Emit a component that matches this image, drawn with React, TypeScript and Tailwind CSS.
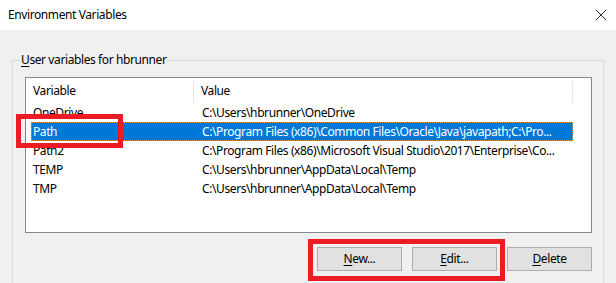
import { X } from "lucide-react";

const rows = [
  { name: "OneDrive", value: "C:\\Users\\hbrunner\\OneDrive" },
  { name: "Path", value: "C:\\Program Files (x86)\\Common Files\\Oracle\\Java\\javapath;C:\\Pro...", selected: true },
  { name: "Path2", value: "C:\\Program Files (x86)\\Microsoft Visual Studio\\2017\\Enterprise\\Co..." },
  { name: "TEMP", value: "C:\\Users\\hbrunner\\AppData\\Local\\Temp" },
  { name: "TMP", value: "C:\\Users\\hbrunner\\AppData\\Local\\Temp" },
];

function Button({ label, hot }: { label: string; hot: string }) {
  const rest = label.slice(1);
  return (
    <button className="flex h-[24px] w-[85px] items-center justify-center border border-[#adadad] bg-[#e1e1e1] text-[12px] text-black">
      <span className="underline underline-offset-2">{hot}</span>
      {rest}
    </button>
  );
}

export default function App() {
  return (
    <div className="relative h-[283px] w-[616px] overflow-hidden bg-[#f0f0f0] font-['Noto_Sans',sans-serif] text-[12px] tracking-[-0.4px] text-black">
      {/* title bar */}
      <div className="flex h-[30px] items-center justify-between bg-white pl-[8px] pr-[5px]">
        <span className="leading-none">Environment Variables</span>
        <X className="h-[20px] w-[20px]" strokeWidth={1} />
      </div>

      {/* group box */}
      <div className="ml-[12px] mt-[30px] h-[260px] w-[592px] border border-[#dcdcdc] pl-[12px] pt-[16px]">
        <div className="absolute left-[20px] top-[51px] bg-[#f0f0f0] px-[1px] leading-[18px]">
          <span className="underline underline-offset-2">U</span>ser variables for hbrunner
        </div>

        {/* list view */}
        <div className="h-[156px] w-[567px] border border-[#828790] bg-white">
          <div className="flex h-[25px] items-center">
            <div className="relative flex h-full w-[168px] items-center pl-[7px]">
              Variable
              <span className="absolute right-0 top-[3px] h-[22px] w-px bg-[#e5e5e5]" />
            </div>
            <div className="relative flex h-full w-[379px] items-center pl-[7px]">
              Value
              <span className="absolute right-0 top-[3px] h-[22px] w-px bg-[#e5e5e5]" />
            </div>
          </div>
          {rows.map((r) => (
            <div
              key={r.name}
              className={
                r.selected
                  ? "ml-[5px] flex h-[19px] w-[542px] items-center border border-dotted border-[#f0a030] bg-[#0078d7] text-white"
                  : "ml-[5px] flex h-[19px] w-[542px] items-center border border-transparent"
              }
            >
              <span className="w-[168px] shrink-0 pl-[1px] whitespace-nowrap">{r.name}</span>
              <span className="whitespace-nowrap pl-[2px]">{r.value}</span>
            </div>
          ))}
        </div>

        <div className="mt-[14px] flex w-[567px] justify-end gap-[10px]">
          <Button label="New..." hot="N" />
          <Button label="Edit..." hot="E" />
          <Button label="Delete" hot="D" />
        </div>
      </div>

      {/* red highlight boxes */}
      <div className="absolute left-[16px] top-[114px] h-[34px] w-[107px] border-[5px] border-[#ed1c24]" />
      <div className="absolute left-[308px] top-[239px] h-[42px] w-[197px] border-[5px] border-[#ed1c24]" />
    </div>
  );
}
